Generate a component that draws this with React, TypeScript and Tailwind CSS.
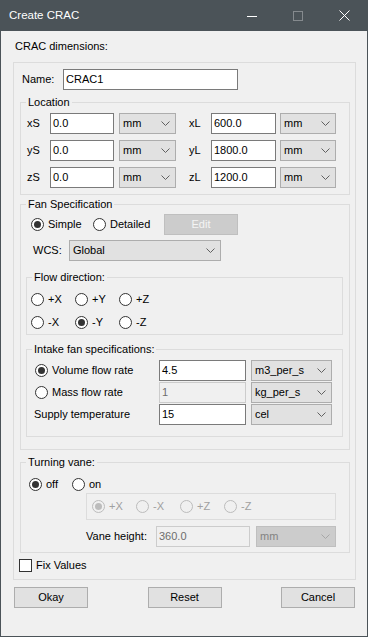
import React from "react";

function Chevron({ disabled }: { disabled?: boolean }) {
  return (
    <svg width="9" height="5" viewBox="0 0 9 5" className="shrink-0">
      <path d="M0.5 0.5 L4.5 4.5 L8.5 0.5" fill="none" stroke={disabled ? "#a6a6a6" : "#606060"} strokeWidth="1" />
    </svg>
  );
}

function Input({ value, w, disabled }: { value: string; w: string; disabled?: boolean }) {
  return (
    <div
      className={`h-[21px] border flex items-center pl-[2px] shrink-0 ${
        disabled ? "bg-[#f0f0f0] border-[#cccccc] text-[#6d6d6d]" : "bg-white border-[#7a7a7a]"
      } ${w}`}
    >
      {value}
    </div>
  );
}

function Combo({ value, w, disabled }: { value: string; w: string; disabled?: boolean }) {
  return (
    <div
      className={`h-[21px] border flex items-center justify-between pl-[3px] pr-[5px] shrink-0 ${
        disabled ? "bg-[#cccccc] border-[#bfbfbf] text-[#838383]" : "bg-[#e1e1e1] border-[#adadad]"
      } ${w}`}
    >
      <span>{value}</span>
      <Chevron disabled={disabled} />
    </div>
  );
}

function Radio({ checked, disabled }: { checked?: boolean; disabled?: boolean }) {
  return (
    <span
      className={`w-[13px] h-[13px] rounded-full border flex items-center justify-center shrink-0 ${
        disabled ? "border-[#bcbcbc] bg-[#f0f0f0]" : "border-[#333333] bg-white"
      }`}
    >
      {checked && (
        <span className={`w-[7px] h-[7px] rounded-full ${disabled ? "bg-[#bcbcbc]" : "bg-[#333333]"}`} />
      )}
    </span>
  );
}

function RadioLabel({
  label,
  checked,
  disabled,
  w,
}: {
  label: string;
  checked?: boolean;
  disabled?: boolean;
  w: string;
}) {
  return (
    <div className={`flex items-center gap-[4px] shrink-0 ${w} ${disabled ? "text-[#a0a0a0]" : ""}`}>
      <Radio checked={checked} disabled={disabled} />
      <span>{label}</span>
    </div>
  );
}

function Group({
  title,
  outer,
  inner,
  children,
}: {
  title: string;
  outer: string;
  inner: string;
  children: React.ReactNode;
}) {
  return (
    <fieldset className={`border border-[#dcdcdc] p-0 m-0 min-w-0 ${outer}`}>
      <legend className="ml-[5px] px-[2px] leading-[15px]">{title}</legend>
      <div className={inner}>{children}</div>
    </fieldset>
  );
}

function Button({ label }: { label: string }) {
  return (
    <div className="w-[74px] h-[21px] bg-[#e1e1e1] border border-[#adadad] flex items-center justify-center">
      {label}
    </div>
  );
}

export default function App() {
  return (
    <div className="w-[368px] h-[637px] bg-[#f0f0f0] border-x border-b border-[#4b5358] flex flex-col text-[11px] leading-[15px] text-black font-['Liberation_Sans',Arial,sans-serif]">
      {/* Title bar */}
      <div className="h-[31px] bg-[#4b5358] flex items-center shrink-0">
        <span className="pl-[8px] text-white text-[11.5px]">Create CRAC</span>
        <div className="ml-auto flex h-full">
          <div className="w-[46px] h-full flex items-center justify-center">
            <svg width="10" height="10" viewBox="0 0 10 10">
              <path d="M0 5.5 H10" stroke="#ffffff" strokeWidth="1" />
            </svg>
          </div>
          <div className="w-[46px] h-full flex items-center justify-center">
            <svg width="10" height="10" viewBox="0 0 10 10">
              <rect x="0.5" y="0.5" width="9" height="9" fill="none" stroke="#858a8e" strokeWidth="1" />
            </svg>
          </div>
          <div className="w-[46px] h-full flex items-center justify-center">
            <svg width="11" height="11" viewBox="0 0 11 11">
              <path d="M0.5 0.5 L10.5 10.5 M10.5 0.5 L0.5 10.5" stroke="#ffffff" strokeWidth="1" />
            </svg>
          </div>
        </div>
      </div>

      <div className="mt-[8px] ml-[14px]">CRAC dimensions:</div>

      {/* Outer box */}
      <div className="mt-[8px] ml-[12px] w-[343px] border border-[#dcdcdc] flex flex-col pb-[7px]">
        {/* Name */}
        <div className="mt-[6px] ml-[8px] h-[21px] flex items-center">
          <span className="w-[41px]">Name:</span>
          <Input value="CRAC1" w="w-[175px]" />
        </div>

        {/* Location */}
        <Group title="Location" outer="mt-[5px] ml-[6px] w-[330px]" inner="pt-[3px] pb-[6px] pl-[6px] flex flex-col gap-[6px]">
          {[
            ["xS", "0.0", "xL", "600.0"],
            ["yS", "0.0", "yL", "1800.0"],
            ["zS", "0.0", "zL", "1200.0"],
          ].map(([a, av, b, bv]) => (
            <div key={a} className="h-[21px] flex items-center">
              <span className="w-[23px]">{a}</span>
              <Input value={av} w="w-[64px]" />
              <div className="ml-[5px]">
                <Combo value="mm" w="w-[57px]" />
              </div>
              <span className="ml-[13px] w-[22px]">{b}</span>
              <Input value={bv} w="w-[65px]" />
              <div className="ml-[4px]">
                <Combo value="mm" w="w-[56px]" />
              </div>
            </div>
          ))}
        </Group>

        {/* Fan Specification */}
        <Group title="Fan Specification" outer="mt-[2px] ml-[6px] w-[330px]" inner="pt-[2px] pb-[12px] flex flex-col">
          <div className="h-[21px] flex items-center pl-[10px]">
            <RadioLabel label="Simple" checked w="w-[62px]" />
            <RadioLabel label="Detailed" w="w-[71px]" />
            <div className="w-[74px] h-[21px] bg-[#cccccc] border border-[#bfbfbf] flex items-center justify-center text-[#f4f4f4]">
              Edit
            </div>
          </div>
          <div className="mt-[5px] h-[21px] flex items-center pl-[12px]">
            <span className="w-[36px]">WCS:</span>
            <Combo value="Global" w="w-[152px]" />
          </div>

          <Group title="Flow direction:" outer="mt-[9px] ml-[5px] w-[317px]" inner="pt-[4px] pb-[1px] pl-[4px] flex flex-col gap-[2px]">
            <div className="h-[21px] flex items-center">
              <RadioLabel label="+X" w="w-[44px]" />
              <RadioLabel label="+Y" w="w-[44px]" />
              <RadioLabel label="+Z" w="w-[44px]" />
            </div>
            <div className="h-[21px] flex items-center">
              <RadioLabel label="-X" w="w-[44px]" />
              <RadioLabel label="-Y" checked w="w-[44px]" />
              <RadioLabel label="-Z" w="w-[44px]" />
            </div>
          </Group>

          <Group title="Intake fan specifications:" outer="mt-[7px] ml-[5px] w-[317px]" inner="pt-[3px] pb-[11px] flex flex-col gap-[1px]">
            <div className="h-[21px] flex items-center pl-[8px]">
              <RadioLabel label="Volume flow rate" checked w="w-[124px]" />
              <Input value="4.5" w="w-[87px]" />
              <div className="ml-[5px]">
                <Combo value="m3_per_s" w="w-[81px]" />
              </div>
            </div>
            <div className="h-[21px] flex items-center pl-[8px]">
              <RadioLabel label="Mass flow rate" w="w-[124px]" />
              <Input value="1" disabled w="w-[87px]" />
              <div className="ml-[5px]">
                <Combo value="kg_per_s" w="w-[81px]" />
              </div>
            </div>
            <div className="h-[21px] flex items-center pl-[7px]">
              <span className="w-[125px]">Supply temperature</span>
              <Input value="15" w="w-[87px]" />
              <div className="ml-[5px]">
                <Combo value="cel" w="w-[81px]" />
              </div>
            </div>
          </Group>
        </Group>

        {/* Turning vane */}
        <Group title="Turning vane:" outer="mt-[5px] ml-[6px] w-[330px]" inner="pt-[7px] pb-[5px] flex flex-col">
          <div className="h-[15px] flex items-center pl-[8px]">
            <RadioLabel label="off" checked w="w-[43px]" />
            <RadioLabel label="on" w="w-[44px]" />
          </div>
          <div className="mt-[1px] ml-[65px] w-[250px] h-[27px] border border-[#dcdcdc] flex items-center pl-[5px]">
            <RadioLabel label="+X" checked disabled w="w-[44px]" />
            <RadioLabel label="-X" disabled w="w-[44px]" />
            <RadioLabel label="+Z" disabled w="w-[44px]" />
            <RadioLabel label="-Z" disabled w="w-[44px]" />
          </div>
          <div className="mt-[6px] ml-[65px] h-[21px] flex items-center">
            <span className="w-[70px]">Vane height:</span>
            <Input value="360.0" disabled w="w-[94px]" />
            <div className="ml-[6px]">
              <Combo value="mm" disabled w="w-[80px]" />
            </div>
          </div>
        </Group>

        {/* Fix values */}
        <div className="mt-[6px] ml-[5px] h-[13px] flex items-center gap-[4px]">
          <span className="w-[13px] h-[13px] border border-[#333333] bg-white shrink-0" />
          <span>Fix Values</span>
        </div>
      </div>

      {/* Buttons */}
      <div className="mt-[7px] ml-[13px] w-[341px] flex justify-between">
        <Button label="Okay" />
        <Button label="Reset" />
        <Button label="Cancel" />
      </div>
    </div>
  );
}
